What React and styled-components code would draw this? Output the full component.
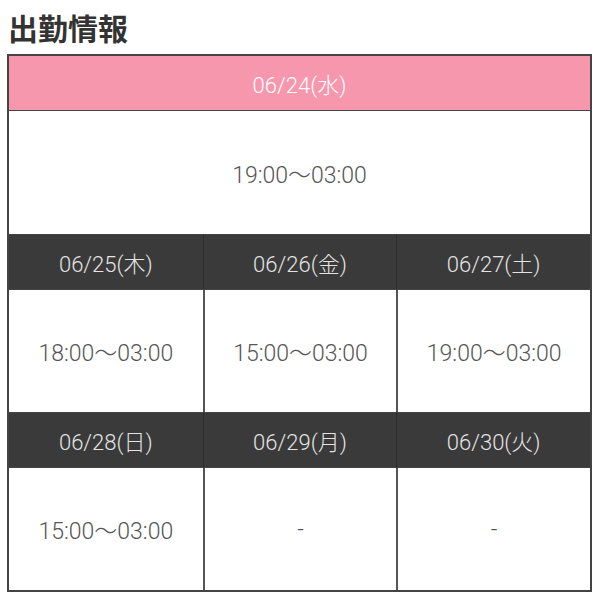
import React from 'react';
import styled, { createGlobalStyle } from 'styled-components';

const GlobalStyle = createGlobalStyle`
  body {
    margin: 0;
    background: #fff;
    font-family: Roboto, "Noto Sans CJK JP", sans-serif;
  }
`;

const Wrapper = styled.section`
  padding: 6px 8px 0 7px;
`;

const Title = styled.h2`
  margin: 0 0 6px 1px;
  font-family: "Noto Sans CJK JP", sans-serif;
  font-size: 30px;
  line-height: 42px;
  font-weight: 700;
  color: #333;
`;

const Grid = styled.div`
  display: grid;
  grid-template-columns: repeat(3, 1fr);
  width: 585px;
  border: 1px solid #444;
  border-width: 1px 2px 2px 2px;
  box-sizing: border-box;
`;

const DateCell = styled.div`
  grid-column: ${({ $span }) => ($span ? `span ${$span}` : 'auto')};
  height: 56px;
  display: flex;
  align-items: center;
  justify-content: center;
  background: ${({ $today }) => ($today ? '#f697ad' : '#3a3a3a')};
  color: ${({ $today }) => ($today ? '#fff' : '#e4e4e4')};
  font-size: 22px;
  font-weight: 300;
  border-top: 1px solid #444;
  border-bottom: 1px solid #444;
  border-left: ${({ $first }) => ($first ? 'none' : '1px solid #2e2e2e')};
  box-sizing: border-box;
`;

const TimeCell = styled.div`
  grid-column: ${({ $span }) => ($span ? `span ${$span}` : 'auto')};
  height: ${({ $tall }) => ($tall ? 123 : 122)}px;
  display: flex;
  align-items: center;
  justify-content: center;
  color: #555;
  font-size: 23px;
  font-weight: 300;
  border-left: ${({ $first }) => ($first ? 'none' : '2px solid #555')};
  box-sizing: border-box;
`;

const rows = [
  [
    ['06/25(木)', '18:00〜03:00'],
    ['06/26(金)', '15:00〜03:00'],
    ['06/27(土)', '19:00〜03:00'],
  ],
  [
    ['06/28(日)', '15:00〜03:00'],
    ['06/29(月)', '-'],
    ['06/30(火)', '-'],
  ],
];

export default function App() {
  return (
    <Wrapper>
      <GlobalStyle />
      <Title>出勤情報</Title>
      <Grid>
        <DateCell $span={3} $today $first>06/24(水)</DateCell>
        <TimeCell $span={3} $tall $first>19:00〜03:00</TimeCell>
        {rows.map((row, r) => (
          <React.Fragment key={r}>
            {row.map(([date], i) => (
              <DateCell key={`d-${date}`} $first={i === 0}>{date}</DateCell>
            ))}
            {row.map(([date, time], i) => (
              <TimeCell key={`t-${date}`} $first={i === 0}>{time}</TimeCell>
            ))}
          </React.Fragment>
        ))}
      </Grid>
    </Wrapper>
  );
}
